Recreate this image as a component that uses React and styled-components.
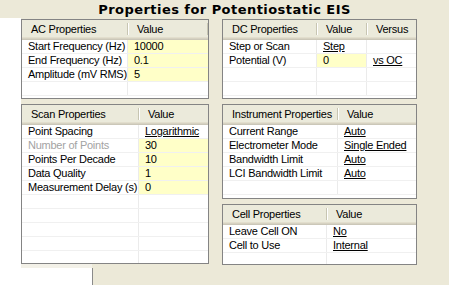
import * as React from "react";
import styled, { createGlobalStyle } from "styled-components";

const GlobalStyle = createGlobalStyle`
    html, body {
        margin: 0;
        padding: 0;
        background: #ECE9D8;
    }
    * {
        box-sizing: border-box;
    }
`;

const acRows = [
    { label: "Start Frequency (Hz)", value: "10000", yellow: true },
    { label: "End Frequency (Hz)", value: "0.1", yellow: true },
    { label: "Amplitude (mV RMS)", value: "5", yellow: true },
];

const dcRows = [
    { label: "Step or Scan", value: "Step", link: true, extra: "" },
    { label: "Potential (V)", value: "0", yellow: true, extra: "vs OC" },
];

const scanRows = [
    { label: "Point Spacing", value: "Logarithmic", link: true },
    { label: "Number of Points", value: "30", yellow: true, disabled: true },
    { label: "Points Per Decade", value: "10", yellow: true },
    { label: "Data Quality", value: "1", yellow: true },
    { label: "Measurement Delay (s)", value: "0", yellow: true },
];

const instrumentRows = [
    { label: "Current Range", value: "Auto", link: true },
    { label: "Electrometer Mode", value: "Single Ended", link: true },
    { label: "Bandwidth Limit", value: "Auto", link: true },
    { label: "LCI Bandwidth Limit", value: "Auto", link: true },
];

const cellRows = [
    { label: "Leave Cell ON", value: "No", link: true },
    { label: "Cell to Use", value: "Internal", link: true },
];

function PropertyPanel({ width, height, cols, headers, rows, total, filler }) {
    const empty = Math.max(0, total - rows.length);
    const many = headers.length > 2;
    return (
        <Panel $w={width} $h={height}>
            <HeaderRow $cols={cols}>
                {headers.map((h, i) => (
                    <HeaderCell key={i} $divider={i < headers.length - 1 || filler}>
                        {h}
                    </HeaderCell>
                ))}
            </HeaderRow>
            {rows.map((r, i) => (
                <Row key={i} $cols={cols}>
                    <Cell $disabled={r.disabled} $line>
                        {r.label}
                    </Cell>
                    <Cell $yellow={r.yellow} $link={r.link} $line={many}>
                        {r.value}
                    </Cell>
                    {r.extra !== undefined && <Cell $link>{r.extra}</Cell>}
                </Row>
            ))}
            {Array.from({ length: empty }).map((_, i) => (
                <Row key={"e" + i} $cols={cols}>
                    {headers.map((_, j) => (
                        <Cell key={j} $line={j < headers.length - 1} />
                    ))}
                </Row>
            ))}
        </Panel>
    );
}

export default function App() {
    return (
        <Page>
            <GlobalStyle />
            <Title>Properties for Potentiostatic EIS</Title>
            <Columns>
                <Column>
                    <PropertyPanel
                        width={188}
                        height={80}
                        cols="106px 1fr"
                        headers={["AC Properties", "Value"]}
                        rows={acRows}
                        total={4}
                        filler
                    />
                    <PropertyPanel
                        width={188}
                        height={160}
                        cols="117px 1fr"
                        headers={["Scan Properties", "Value"]}
                        rows={scanRows}
                        total={10}
                    />
                </Column>
                <Column>
                    <PropertyPanel
                        width={195}
                        height={80}
                        cols="94px 50px 1fr"
                        headers={["DC Properties", "Value", "Versus"]}
                        rows={dcRows}
                        total={4}
                    />
                    <PropertyPanel
                        width={195}
                        height={95}
                        cols="115px 1fr"
                        headers={["Instrument Properties", "Value"]}
                        rows={instrumentRows}
                        total={5}
                    />
                    <PropertyPanel
                        width={195}
                        height={61}
                        cols="104px 1fr"
                        headers={["Cell Properties", "Value"]}
                        rows={cellRows}
                        total={3}
                    />
                </Column>
            </Columns>
        </Page>
    );
}

const Page = styled.div`
    width: 449px;
    height: 285px;
    overflow: hidden;
    font-family: "Liberation Sans", Arial, sans-serif;
    font-size: 11px;
    letter-spacing: -0.25px;
    color: #000;
    background:
        linear-gradient(#8a8a8a, #8a8a8a) 92px 268px / 1px 17px no-repeat,
        linear-gradient(#f3f1e8, #f3f1e8) 21px 262px / 71px 6px no-repeat,
        linear-gradient(#fff, #fff) 0 268px / 92px 17px no-repeat,
        linear-gradient(#fff, #fff) 0 18px / 21px 267px no-repeat,
        #ECE9D8;
`;

const Title = styled.div`
    height: 19px;
    line-height: 20px;
    text-align: center;
    font-family: "DejaVu Sans", Verdana, sans-serif;
    font-weight: 700;
    font-size: 13px;
    letter-spacing: 0.45px;
`;

const Columns = styled.div`
    display: flex;
    gap: 13px;
    padding-left: 21px;
`;

const Column = styled.div`
    display: flex;
    flex-direction: column;
    gap: 5px;
`;

const Panel = styled.div`
    width: ${(p) => p.$w}px;
    height: ${(p) => p.$h}px;
    border: 1px solid #848484;
    background: #fff;
    overflow: hidden;
`;

const HeaderRow = styled.div`
    display: grid;
    grid-template-columns: ${(p) => p.$cols};
    height: 20px;
    background: #EBEADB;
    box-shadow: inset 0 -1px #CBC7B8, inset 0 -2px #D6D2C2, inset 0 -3px #E2DECD;
`;

const HeaderCell = styled.div`
    position: relative;
    padding-left: 9px;
    line-height: 19px;
    white-space: nowrap;
    &::after {
        content: "";
        display: ${(p) => (p.$divider ? "block" : "none")};
        position: absolute;
        right: 0;
        top: 3px;
        bottom: 5px;
        width: 1px;
        background: #C7C5B2;
        box-shadow: 1px 0 #fff;
    }
`;

const Row = styled.div`
    display: grid;
    grid-template-columns: ${(p) => p.$cols};
    height: 14px;
    border-bottom: 1px solid #F0F0F0;
`;

const Cell = styled.div`
    padding-left: 6px;
    line-height: 13px;
    white-space: nowrap;
    overflow: hidden;
    color: ${(p) => (p.$disabled ? "#A3A3A3" : "#000")};
    background: ${(p) => (p.$yellow ? "#FFFFC8" : "transparent")};
    text-decoration: ${(p) => (p.$link ? "underline" : "none")};
    border-right: 1px solid ${(p) => (p.$line ? "#EBEBEB" : "transparent")};
`;
